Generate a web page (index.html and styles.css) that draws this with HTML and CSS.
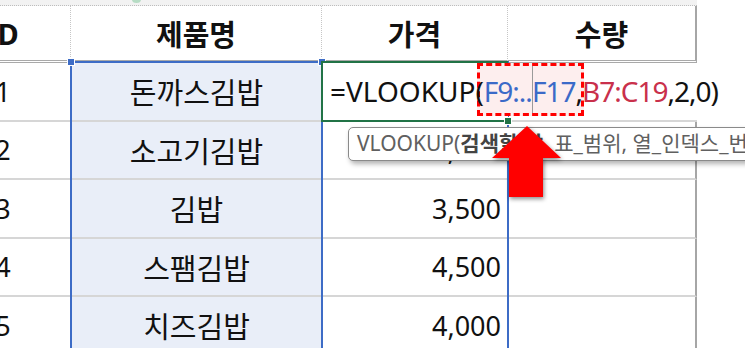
FILE: index.html
```html
<!DOCTYPE html>
<html lang="ko">
<head>
    <meta charset="UTF-8">
    <meta name="viewport" content="width=device-width, initial-scale=1.0">
    <title>VLOOKUP</title>
    <link rel="stylesheet" href="styles.css">
</head>
<body>
    <div class="sheet">
        <div class="strip"></div>
        <div></div>

        <div class="hd">ID</div>
        <div class="hd">제품명</div>
        <div class="hd">가격</div>
        <div class="hd last">수량</div>
        <div class="hd out"></div>

        <div class="cell id">1</div>
        <div class="cell name">돈까스김밥</div>
        <div class="cell active">
            <div class="mark"></div>
            <span class="formula">=VLOOKUP(<span class="args"><span class="ref-a">F9:..</span><span class="ref-a">F17</span>,<span class="ref-b">B7:C19</span>,2,0)</span></span>
        </div>
        <div class="cell qty first"></div>
        <div class="cell out"></div>

        <div class="cell id">2</div>
        <div class="cell name">소고기김밥</div>
        <div class="cell price">7,000</div>
        <div class="cell qty"></div>
        <div class="cell out"></div>

        <div class="cell id">3</div>
        <div class="cell name">김밥</div>
        <div class="cell price">3,500</div>
        <div class="cell qty"></div>
        <div class="cell out"></div>

        <div class="cell id">4</div>
        <div class="cell name">스팸김밥</div>
        <div class="cell price">4,500</div>
        <div class="cell qty"></div>
        <div class="cell out"></div>

        <div class="cell id">5</div>
        <div class="cell name">치즈김밥</div>
        <div class="cell price">4,000</div>
        <div class="cell qty"></div>
        <div class="cell out"></div>

        <!-- range outlines drawn over the cells -->
        <div class="range range-b"></div>
        <div class="range range-c"></div>
        <div class="blob"></div>

        <div class="tip">VLOOKUP(<b>검색할 값</b>, 표_범위, 열_인덱스_번호, [범위_검색])</div>

        <svg class="arrow" width="76" height="80" viewBox="0 0 76 80">
            <polygon points="39,4 4,36 21,36 21,75 55,75 55,36 73,36" fill="#ff0000"/>
        </svg>
    </div>
</body>
</html>
```

FILE: styles.css
```css
body {
    margin: 0;
    background-color: #fff;
    overflow: hidden;
    font-family: "Noto Sans", "Noto Sans CJK KR", sans-serif;
    color: #111;
}
.sheet {
    position: relative;
    display: grid;
    grid-template-columns: 136px 251px 186px 189px 48px;
    grid-template-rows: 6px 57px repeat(5, 58.5px);
    margin-left: -65px;
    width: 810px;
    height: 348px;
    overflow: hidden;
}
.strip {
    grid-column: 1 / 5;
    background-color: #f2f2f2;
    border-bottom: 1px dotted #bdbdbd;
}
.hd {
    display: flex;
    align-items: center;
    justify-content: center;
    box-sizing: border-box;
    font-weight: 700;
    font-size: 29px;
    border-right: 1px dotted #c6c6c6;
    border-bottom: 3px double #a9a9a9;
}
.hd.last {
    border-right: 2px solid #a6a6a6;
}
.hd.out {
    border: none;
}
.cell {
    display: flex;
    align-items: center;
    box-sizing: border-box;
    font-size: 27px;
    border-bottom: 2px solid #d6d6d6;
}
.cell.id {
    justify-content: center;
}
.cell.name {
    justify-content: center;
    font-size: 29px;
    background-color: #e9eef8;
}
.cell.price {
    justify-content: flex-end;
    padding-right: 7px;
}
.cell.qty {
    border-right: 2px solid #a6a6a6;
}
.cell.qty.first {
    border-right: none;
}
.cell.out {
    border: none;
}
.cell.active {
    position: relative;
    z-index: 3;
    margin-top: -2px;
    margin-left: -1px;
    border: 2px solid #217346;
    border-right: none;
    background-color: #fff;
    white-space: nowrap;
    font-size: 28px;
}
.cell.active::after {
    content: "";
    position: absolute;
    right: -4px;
    bottom: -5px;
    width: 6px;
    height: 6px;
    background-color: #217346;
    border: 1px solid #fff;
}
.formula {
    position: relative;
    z-index: 1;
    padding-left: 7px;
}
.args {
    letter-spacing: -1px;
}
.ref-a {
    color: #3b6ac8;
}
.ref-b {
    color: #c9304b;
}
.mark {
    position: absolute;
    left: 154px;
    top: 0;
    width: 107px;
    height: 53px;
    box-sizing: border-box;
    border: 3px dashed #f00;
    background-color: #fdeeee;
}
.mark::before {
    content: "";
    position: absolute;
    left: 52px;
    top: 0;
    bottom: 0;
    width: 1px;
    background-color: #9a9a9a;
}
.range {
    position: absolute;
    z-index: 1;
    top: 61px;
    height: 300px;
    box-sizing: border-box;
    border: 2px solid #3d6cc6;
    border-bottom: none;
}
.range::before {
    content: "";
    position: absolute;
    left: -5px;
    top: -5px;
    width: 6px;
    height: 6px;
    background-color: #3d6cc6;
    border: 1px solid #fff;
}
.range-b {
    left: 135px;
    width: 253px;
}
.range-c {
    left: 386px;
    width: 188px;
}
.blob {
    position: absolute;
    left: 197px;
    top: -4px;
    width: 9px;
    height: 7px;
    border-radius: 50%;
    background-color: #b6dcc4;
}
.tip {
    position: absolute;
    z-index: 4;
    left: 413px;
    top: 127px;
    width: 420px;
    height: 34px;
    box-sizing: border-box;
    padding-left: 8px;
    border: 1px solid #8a8a8a;
    border-radius: 5px;
    background-color: #fff;
    box-shadow: 2px 3px 5px rgba(0, 0, 0, 0.3);
    font-size: 21px;
    line-height: 31px;
    color: #606060;
    white-space: nowrap;
}
.tip b {
    color: #444;
}
.arrow {
    position: absolute;
    z-index: 5;
    left: 553px;
    top: 122px;
    filter: drop-shadow(1px 2px 2px rgba(0, 0, 0, 0.45));
}
```
